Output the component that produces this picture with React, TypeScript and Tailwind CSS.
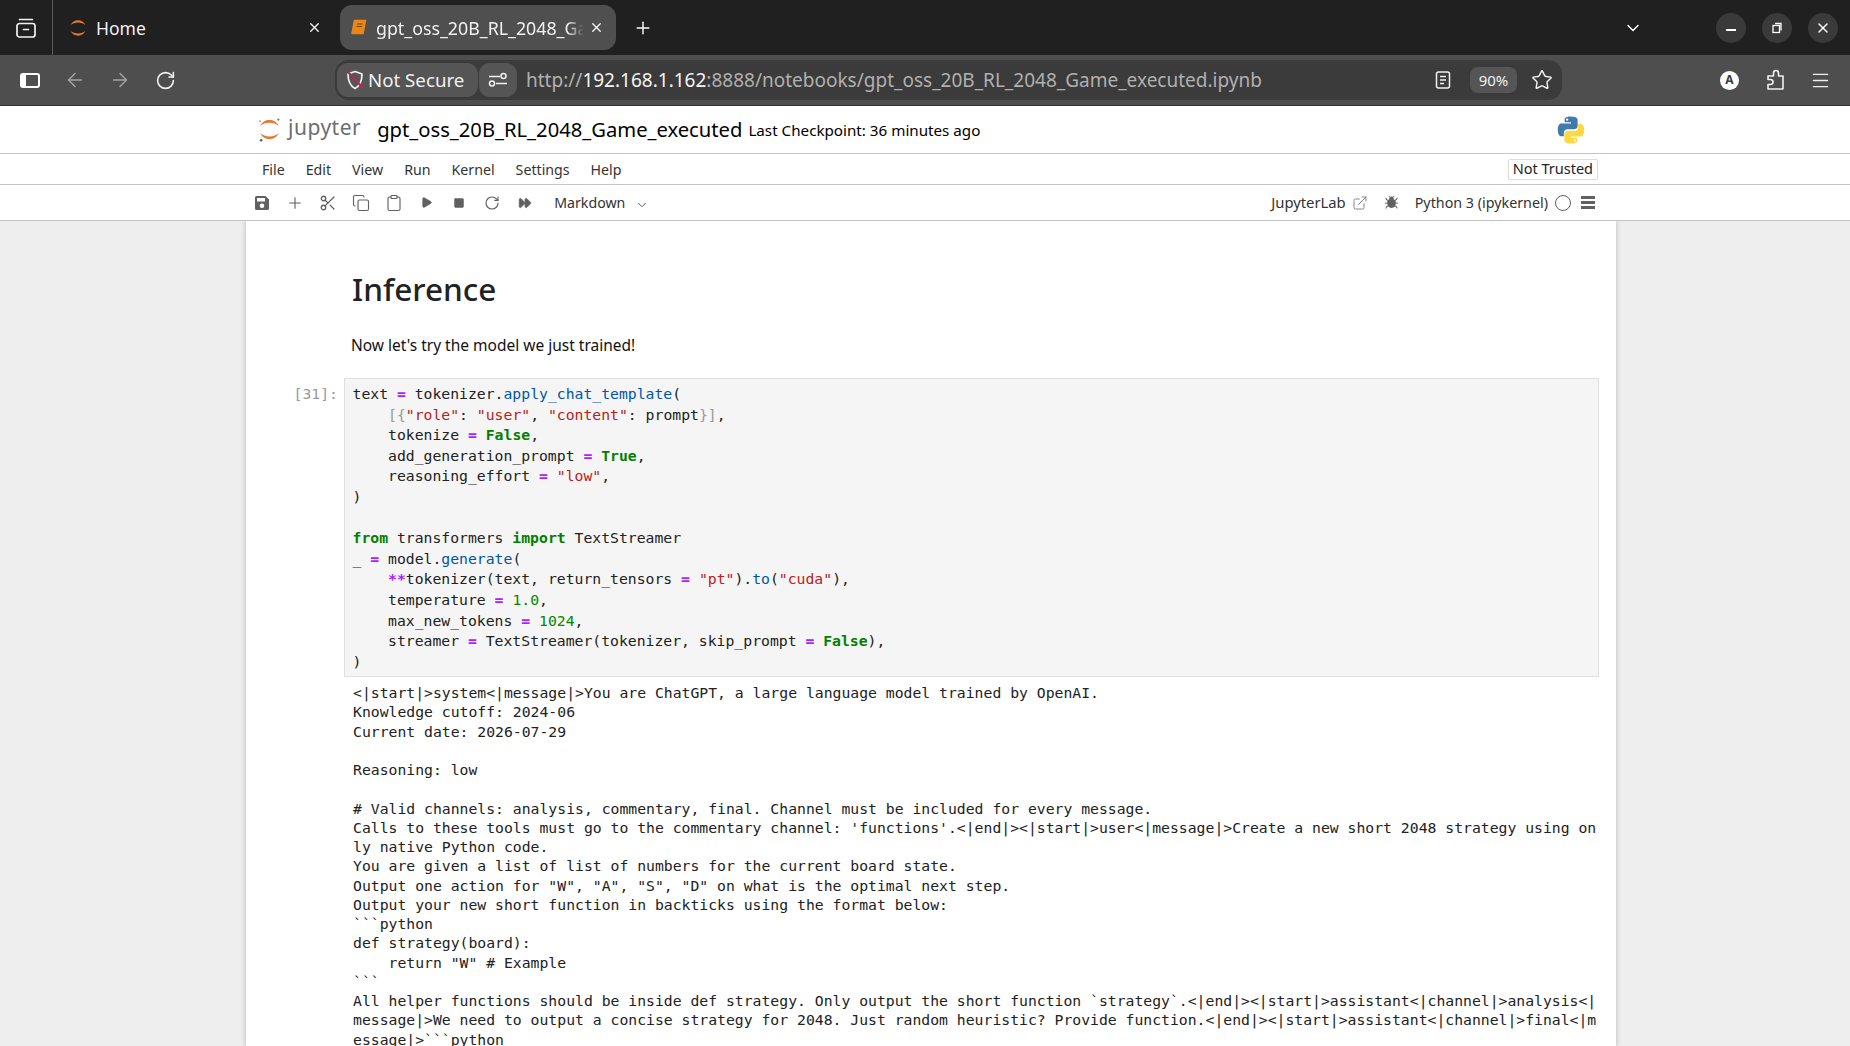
import React from "react";
import { ArrowLeft, ArrowRight, RotateCw, X, Plus, ChevronDown, Star, Menu, Scissors, Copy, Clipboard, Play, Square, FastForward, Bug, ExternalLink } from "lucide-react";

const K = ({ c }: { c: string }) => <span className="font-bold text-[#008000]">{c}</span>;
const O = ({ c }: { c: string }) => <span className="font-bold text-[#aa22ff]">{c}</span>;
const S = ({ c }: { c: string }) => <span className="text-[#ba2121]">{c}</span>;
const F = ({ c }: { c: string }) => <span className="text-[#0055aa]">{c}</span>;
const N = ({ c }: { c: string }) => <span className="text-[#008800]">{c}</span>;
const B = ({ c }: { c: string }) => <span className="text-[#999999]">{c}</span>;

const outputLines = [
  "<|start|>system<|message|>You are ChatGPT, a large language model trained by OpenAI.",
  "Knowledge cutoff: 2024-06",
  "Current date: 2026-07-29",
  " ",
  "Reasoning: low",
  " ",
  "# Valid channels: analysis, commentary, final. Channel must be included for every message.",
  "Calls to these tools must go to the commentary channel: 'functions'.<|end|><|start|>user<|message|>Create a new short 2048 strategy using on",
  "ly native Python code.",
  "You are given a list of list of numbers for the current board state.",
  'Output one action for "W", "A", "S", "D" on what is the optimal next step.',
  "Output your new short function in backticks using the format below:",
  "```python",
  "def strategy(board):",
  '    return "W" # Example',
  "```",
  "All helper functions should be inside def strategy. Only output the short function `strategy`.<|end|><|start|>assistant<|channel|>analysis<|",
  "message|>We need to output a concise strategy for 2048. Just random heuristic? Provide function.<|end|><|start|>assistant<|channel|>final<|m",
  "essage|>```python",
];

function JupyterArcs({ size, dots }: { size: number; dots?: boolean }) {
  return (
    <svg width={size} height={size} viewBox="0 0 24 24" className="shrink-0">
      <path d="M3 8.6C5 4.6 8.2 2.8 12 2.8s7 1.8 9 5.8C18.6 6.4 15.6 5.4 12 5.4S5.400 6.400 3 8.600Z" fill="#e8792b" />
      <path d="M3 15.400C5 19.400 8.200 21.200 12 21.200s7-1.800 9-5.800C18.600 17.600 15.600 18.600 12 18.600S5.400 17.600 3 15.400Z" fill="#e8792b" />
      {dots && <circle cx="20.500" cy="2.500" r="1.100" fill="#767677" />}
      {dots && <circle cx="3" cy="4" r="0.900" fill="#9e9e9e" />}
      {dots && <circle cx="4" cy="22.300" r="1.300" fill="#616262" />}
    </svg>
  );
}

function PythonLogo() {
  return (
    <svg width="28" height="28" viewBox="0 0 110 110" className="shrink-0">
      <path fill="#3f7cac" d="M54 2C28 2 30 13 30 13v12h25v4H20S3 27 3 54s15 26 15 26h9V67s-.500-15 15-15h25s14 .200 14-14V15S83 2 54 2Zm-14 8a4.500 4.500 0 1 1 0 9 4.500 4.500 0 0 1 0-9Z" />
      <path fill="#ffd845" d="M56 108c26 0 24-11 24-11V85H55v-4h35s17 2 17-25-15-26-15-26h-9v13s.500 15-15 15H43s-14-.200-14 14v23s-2 13 27 13Zm14-8a4.500 4.500 0 1 1 0-9 4.500 4.500 0 0 1 0 9Z" />
    </svg>
  );
}

function WinBtn({ children }: { children: React.ReactNode }) {
  return <div className="w-[30px] h-[30px] rounded-full bg-[#3a3a3a] flex items-center justify-center text-white">{children}</div>;
}

function ToolSlot({ children }: { children: React.ReactNode }) {
  return <div className="w-[32.800px] flex items-center justify-center shrink-0">{children}</div>;
}

export default function App() {
  return (
    <div className="h-screen w-full overflow-hidden flex flex-col bg-[#eeeeee] font-['Noto_Sans',sans-serif]">
      {/* Tab strip */}
      <div className="h-[55px] shrink-0 bg-[#202020] flex items-center text-white">
        <div className="w-[53px] h-full border-r border-[#5a5a5a] flex items-center justify-center">
          <svg width="22" height="22" viewBox="0 0 22 22" fill="none" stroke="#f2f2f2" strokeWidth="1.700">
            <rect x="2" y="6.500" width="18" height="13.500" rx="2.500" />
            <path d="M4.500 2.500h13M8.500 12.500h5" strokeLinecap="round" />
          </svg>
        </div>
        <div className="w-[287px] h-full flex items-center pl-[15px] pr-[18px]">
          <JupyterArcs size={20} />
          <span className="ml-[8px] mt-[1px] text-[17.500px] flex-1 text-[#f0f0f0]">Home</span>
          <X size={15} strokeWidth={2} />
        </div>
        <div className="w-[276px] h-[45px] rounded-[12px] bg-[#4f4f4f] flex items-center pl-[10px] pr-[10px]">
          <svg width="18" height="18" viewBox="0 0 18 18" className="shrink-0">
            <path d="M4.500 1.500h11l-2.500 13H2Z" fill="#e8861a" stroke="#e8861a" strokeWidth="1.500" strokeLinejoin="round" />
            <path d="M7 5h5.500M6.500 7.500H12" stroke="#7a4308" strokeWidth="1.200" />
          </svg>
          <span className="ml-[8px] mt-[1px] w-[208px] overflow-hidden whitespace-nowrap text-[17.800px] text-[#f0f0f0] [mask-image:linear-gradient(to_right,black_92%,transparent)]">gpt_oss_20B_RL_2048_Game_executed</span>
          <X size={15} strokeWidth={2} className="ml-[5px]" />
        </div>
        <Plus size={20} strokeWidth={1.700} className="ml-[17px]" />
        <div className="flex-1" />
        <ChevronDown size={20} strokeWidth={1.700} className="mr-[73px]" />
        <div className="flex items-center gap-[16px] pr-[12px]">
          <WinBtn><div className="w-[10px] h-[2px] bg-white mt-[5px]" /></WinBtn>
          <WinBtn>
            <svg width="12" height="12" viewBox="0 0 12 12" fill="none" stroke="white" strokeWidth="1.300">
              <rect x="2" y="3.500" width="6.500" height="7" />
              <path d="M4 1.500h6v7" />
            </svg>
          </WinBtn>
          <WinBtn><X size={16} strokeWidth={2} /></WinBtn>
        </div>
      </div>

      {/* Address toolbar */}
      <div className="h-[51px] shrink-0 bg-[#4e4e4e] border-b border-[#333333] flex items-center text-white">
        <div className="w-[335px] flex items-center pl-[20px] shrink-0">
          <div className="w-[20px] h-[15px] rounded-[3px] border-2 border-white border-l-[6px]" />
          <ArrowLeft size={22} strokeWidth={1.600} className="ml-[24px] text-[#a4a4a4]" />
          <ArrowRight size={22} strokeWidth={1.600} className="ml-[23px] text-[#a4a4a4]" />
          <RotateCw size={21} strokeWidth={1.800} className="ml-[24px] text-[#f2f2f2]" />
        </div>
        <div className="w-[1227px] h-[40px] rounded-[14px] bg-[#3b3b3b] flex items-center pl-[2px] pr-[8px] shrink-0">
          <div className="w-[141px] h-[34px] rounded-[11px] bg-[#555555] flex items-center pl-[8px] shrink-0">
            <svg width="20" height="22" viewBox="0 0 20 22" fill="none" className="shrink-0">
              <path d="M10 2.500 17 5c0 7-1.500 11.500-7 14.500C4.500 16.500 3 12 3 5Z" stroke="#f2f2f2" strokeWidth="1.700" strokeLinejoin="round" />
              <path d="M2 2l16 17" stroke="#b32a55" strokeWidth="2" />
            </svg>
            <span className="ml-[3px] text-[18.700px] text-[#f0f0f0] whitespace-nowrap">Not Secure</span>
          </div>
          <div className="ml-[1px] w-[38px] h-[34px] rounded-[11px] bg-[#555555] flex items-center justify-center shrink-0">
            <svg width="20" height="16" viewBox="0 0 20 16" fill="none" stroke="#f0f0f0" strokeWidth="1.500">
              <path d="M1 4.500h11M8 11.500h11" />
              <circle cx="15.500" cy="4" r="2.500" />
              <circle cx="4" cy="11.500" r="2.500" />
            </svg>
          </div>
          <div className="ml-[9px] text-[19px] whitespace-nowrap text-[#b0b0b0]">
            http://<span className="text-[#f4f4f4]">192.168.1.162</span>:8888/notebooks/gpt_oss_20B_RL_2048_Game_executed.ipynb
          </div>
          <div className="flex-1" />
          <svg width="16" height="20" viewBox="0 0 16 20" fill="none" stroke="#f0f0f0" strokeWidth="1.500" className="shrink-0 mr-[19px]">
            <rect x="1.500" y="2" width="13" height="16" rx="2" />
            <path d="M5 6.500h6M5 10h6M5 13.500h4" />
          </svg>
          <div className="w-[47px] h-[26px] rounded-[8px] bg-[#555555] text-[15px] flex items-center justify-center text-[#f0f0f0] mr-[14px]">90%</div>
          <Star size={22} strokeWidth={1.600} className="text-[#f0f0f0] mr-[1px]" />
        </div>
        <div className="flex-1 flex items-center pl-[158px]">
          <div className="w-[19px] h-[19px] rounded-full bg-white text-[#3b3b3b] text-[12px] font-bold flex items-center justify-center shrink-0">A</div>
          <svg width="20" height="24" viewBox="0 0 20 24" fill="none" stroke="#f0f0f0" strokeWidth="1.600" strokeLinejoin="round" className="ml-[27px] shrink-0">
            <path d="M2 8h5.500V5a2.500 2.500 0 0 1 5 0v3H17v13H2v-4.500h2.500a2.500 2.500 0 0 0 0-5H2Z" />
          </svg>
          <Menu size={21} strokeWidth={1.700} className="ml-[24px] text-[#f0f0f0]" />
        </div>
      </div>

      {/* Jupyter header */}
      <div className="h-[48px] shrink-0 bg-white border-b border-[#c4c4c4] flex items-center pl-[257px] pr-[265px]">
        <JupyterArcs size={25} dots />
        <span className="ml-[6px] -mt-[5px] text-[21px] text-[#6d6d6d] tracking-[0.5px] leading-none">jupyter</span>
        <span className="ml-[16px] text-[20.200px] text-black whitespace-nowrap">gpt_oss_20B_RL_2048_Game_executed</span>
        <span className="ml-[6px] mt-[1px] text-[15.200px] text-black whitespace-nowrap">Last Checkpoint: 36 minutes ago</span>
        <div className="flex-1" />
        <PythonLogo />
      </div>

      {/* Menu */}
      <div className="h-[31px] shrink-0 bg-white border-b border-[#c4c4c4] flex items-center pl-[262px] pr-[252px] text-[14.200px] text-[#333333]">
        <div className="flex items-center gap-[21px] mt-[1px]">
          {["File", "Edit", "View", "Run", "Kernel", "Settings", "Help"].map((m) => (
            <span key={m}>{m}</span>
          ))}
        </div>
        <div className="flex-1" />
        <div className="h-[21px] px-[4px] border border-[#dddddd] rounded-[2px] flex items-center text-[14.500px] text-[#222222]">Not Trusted</div>
      </div>

      {/* Notebook toolbar */}
      <div className="h-[36px] shrink-0 bg-white border-b border-[#c4c4c4] flex items-center pl-[246px] pr-[255px] text-[#616161]">
        <div className="flex items-center">
          <ToolSlot>
            <svg width="16" height="16" viewBox="0 0 16 16" fill="#616161">
              <path d="M2.500 1h9L15 4.500v9a1.500 1.500 0 0 1-1.500 1.500h-11A1.500 1.500 0 0 1 1 13.500v-11A1.500 1.500 0 0 1 2.500 1ZM3 3v3.500h8V3Zm5 5.500a2.300 2.300 0 1 0 0 4.600 2.300 2.300 0 0 0 0-4.600Z" fillRule="evenodd" />
            </svg>
          </ToolSlot>
          <ToolSlot><Plus size={18} strokeWidth={1.500} /></ToolSlot>
          <ToolSlot><Scissors size={18} strokeWidth={1.700} /></ToolSlot>
          <ToolSlot><Copy size={18} strokeWidth={1.500} /></ToolSlot>
          <ToolSlot><Clipboard size={18} strokeWidth={1.500} /></ToolSlot>
          <ToolSlot><Play size={13} fill="#616161" strokeWidth={1} /></ToolSlot>
          <ToolSlot><Square size={12} fill="#616161" strokeWidth={1} /></ToolSlot>
          <ToolSlot><RotateCw size={16} strokeWidth={1.700} /></ToolSlot>
          <ToolSlot><FastForward size={14} fill="#616161" strokeWidth={1} /></ToolSlot>
        </div>
        <span className="ml-[13px] text-[14.200px] text-[#333333]">Markdown</span>
        <ChevronDown size={14} strokeWidth={1.700} className="ml-[10px] mt-[4px]" />
        <div className="flex-1" />
        <span className="text-[14.800px] text-[#333333]">JupyterLab</span>
        <ExternalLink size={16} strokeWidth={1.300} className="ml-[6px] text-[#777777]" />
        <Bug size={15} fill="#616161" strokeWidth={1.500} className="ml-[16px]" />
        <span className="ml-[16px] text-[14.300px] text-[#333333]">Python 3 (ipykernel)</span>
        <div className="ml-[7px] w-[16px] h-[16px] rounded-full border-[1.500px] border-[#616161]" />
        <div className="ml-[10px] w-[14px] flex flex-col gap-[2px]">
          <div className="h-[3px] bg-[#616161]" />
          <div className="h-[3px] bg-[#616161]" />
          <div className="h-[3px] bg-[#616161]" />
        </div>
      </div>

      {/* Notebook area */}
      <div className="flex-1 min-h-0 overflow-hidden">
        <div className="ml-[246px] w-[1370px] h-full bg-white shadow-[0_0_5px_rgba(0,0,0,0.25)] pr-[17px]">
          <div className="pl-[105px] pt-[47px]">
            <h1 className="pl-[1px] text-[31.500px] font-medium leading-[42px] text-[#222222]">Inference</h1>
            <p className="mt-[24px] text-[15.500px] leading-[22px] text-[#111111]">Now let's try the model we just trained!</p>
          </div>
          <div className="mt-[22px] flex font-['DejaVu_Sans_Mono',monospace] text-[14.750px]">
            <div className="w-[98px] shrink-0 pr-[6px] text-right text-[#9a9a9a] pt-[6px] leading-[20.600px]">[31]:</div>
            <div className="flex-1 min-w-0">
              <pre className="border border-[#e0e0e0] bg-[#f5f5f5] pl-[7.500px] pt-[5px] pb-[3px] leading-[20.600px] text-[#222222] font-['DejaVu_Sans_Mono',monospace] h-[299px] overflow-hidden">
                <div>text <O c="=" /> tokenizer.<F c="apply_chat_template" />(</div>
                <div>    <B c="[{" /><S c={'"role"'} />: <S c={'"user"'} />, <S c={'"content"'} />: prompt<B c="}]" />,</div>
                <div>    tokenize <O c="=" /> <K c="False" />,</div>
                <div>    add_generation_prompt <O c="=" /> <K c="True" />,</div>
                <div>    reasoning_effort <O c="=" /> <S c={'"low"'} />,</div>
                <div>)</div>
                <div> </div>
                <div><K c="from" /> transformers <K c="import" /> TextStreamer</div>
                <div>_ <O c="=" /> model.<F c="generate" />(</div>
                <div>    <O c="**" />tokenizer(text, return_tensors <O c="=" /> <S c={'"pt"'} />).<F c="to" />(<S c={'"cuda"'} />),</div>
                <div>    temperature <O c="=" /> <N c="1.0" />,</div>
                <div>    max_new_tokens <O c="=" /> <N c="1024" />,</div>
                <div>    streamer <O c="=" /> TextStreamer(tokenizer, skip_prompt <O c="=" /> <K c="False" />),</div>
                <div>)</div>
              </pre>
              <pre className="pl-[9px] pt-[6px] leading-[19.250px] text-[#222222] font-['DejaVu_Sans_Mono',monospace]">
                {outputLines.map((l, i) => (
                  <div key={i}>{l}</div>
                ))}
              </pre>
            </div>
          </div>
        </div>
      </div>
    </div>
  );
}
